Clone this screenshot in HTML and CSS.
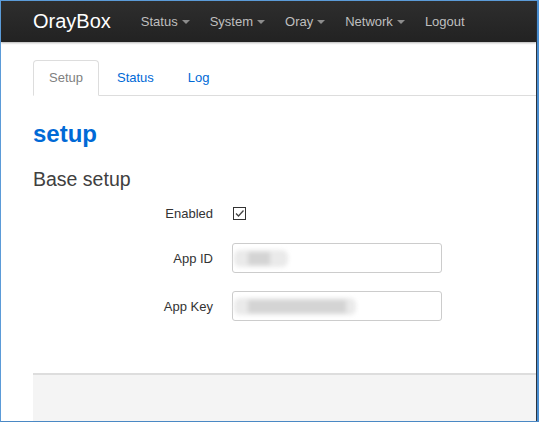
FILE: index.html
```html
<!DOCTYPE html>
<html>
<head>
<meta charset="utf-8">
<link rel="stylesheet" href="styles.css">
</head>
<body>
<div class="frame">
  <div class="inner">
    <header class="navbar">
      <span class="brand">OrayBox</span>
      <nav class="nav">
        <a class="nav-link">Status<span class="caret"></span></a>
        <a class="nav-link">System<span class="caret"></span></a>
        <a class="nav-link">Oray<span class="caret"></span></a>
        <a class="nav-link">Network<span class="caret"></span></a>
        <a class="nav-link">Logout</a>
      </nav>
    </header>
    <main class="content">
      <ul class="tabs">
        <li class="tab active">Setup</li>
        <li class="tab">Status</li>
        <li class="tab">Log</li>
      </ul>
      <h2 class="title">setup</h2>
      <h3 class="section">Base setup</h3>
      <div class="form">
        <div class="row row-check">
          <label class="label">Enabled</label>
          <span class="checkbox">
            <svg width="11" height="11" viewBox="0 0 11 11"><path d="M2 5.5 L4.5 8 L9.5 2.5" fill="none" stroke="#444" stroke-width="1.3"/></svg>
          </span>
        </div>
        <div class="row">
          <label class="label">App ID</label>
          <div class="field">
            <input class="input" type="text">
            <span class="blur blur-id"><span class="blur-core core-id"></span></span>
          </div>
        </div>
        <div class="row">
          <label class="label">App Key</label>
          <div class="field">
            <input class="input" type="text">
            <span class="blur blur-key"><span class="blur-core core-key"></span></span>
          </div>
        </div>
      </div>
      <div class="footer"></div>
    </main>
  </div>
</div>
</body>
</html>
```

FILE: styles.css
```css
* { box-sizing: border-box; }
html, body { margin: 0; padding: 0; }
body {
  font-family: "Liberation Sans", Arial, sans-serif;
  background: #fff;
  overflow: hidden;
}
.frame {
  width: 539px;
  height: 422px;
  border-top: 1px solid #5b9bd8;
  border-left: 1px solid #5b9bd8;
  border-bottom: 1px solid #4a88c4;
  border-right: 2px solid #4a8ed0;
  overflow: hidden;
}
.inner {
  height: 100%;
  border-right: 1px solid #2a3440;
  display: flex;
  flex-direction: column;
}
.navbar {
  height: 41px;
  flex: none;
  background: linear-gradient(#2e2e2e, #222);
  box-shadow: 0 1px 2px rgba(0,0,0,0.3);
  display: flex;
  align-items: center;
  padding-left: 32px;
  position: relative;
  z-index: 1;
}
.brand {
  color: #fff;
  font-size: 20px;
  margin-right: 20px;
  line-height: 1;
  margin-top: -2px;
}
.nav { display: flex; align-items: center; }
.nav-link {
  color: #bfbfbf;
  font-size: 13px;
  padding: 0 10px;
  display: flex;
  align-items: center;
}
.caret {
  display: inline-block;
  width: 0; height: 0;
  border-top: 4px solid #8c8c8c;
  border-left: 4px solid transparent;
  border-right: 4px solid transparent;
  margin-left: 4px;
  margin-top: 1px;
}
.content {
  flex: 1;
  padding-left: 32px;
  display: flex;
  flex-direction: column;
}
.tabs {
  list-style: none;
  margin: 18px 0 0 0;
  padding: 0;
  display: flex;
  border-bottom: 1px solid #ddd;
  height: 36px;
}
.tab {
  font-size: 13px;
  color: #0069d6;
  padding: 0 15px;
  margin-right: 2px;
  line-height: 34px;
  height: 36px;
  border: 1px solid transparent;
  border-radius: 4px 4px 0 0;
}
.tab.active {
  color: #808080;
  border-color: #ddd;
  border-bottom-color: #fff;
  background: #fff;
}
.title {
  margin: 24px 0 0 0;
  font-size: 24px;
  font-weight: bold;
  color: #0069d6;
  line-height: 28px;
}
.section {
  margin: 19px 0 0 0;
  font-size: 19.5px;
  font-weight: normal;
  color: #404040;
  line-height: 24px;
}
.form {
  margin-top: 9px;
  display: flex;
  flex-direction: column;
  gap: 18px;
}
.row {
  display: flex;
  align-items: center;
  height: 30px;
}
.row-check { height: 26px; margin-bottom: -1px; }
.label {
  width: 180px;
  text-align: right;
  font-size: 13px;
  color: #333;
  margin-right: 19px;
}
.checkbox {
  width: 13px; height: 13px;
  border: 1px solid #333;
  display: flex; align-items: center; justify-content: center;
  margin-left: 1px;
  background: #fff;
}
.field { position: relative; width: 210px; height: 30px; }
.input {
  width: 210px;
  height: 30px;
  border: 1px solid #ccc;
  border-radius: 3px;
  background: #fff;
  display: block;
}
.blur {
  position: absolute;
  top: 7px;
  left: 2px;
  height: 17px;
  background: #eaeaea;
  filter: blur(2px);
  border-radius: 6px;
}
.blur-id { width: 54px; }
.blur-key { width: 122px; }
.blur-core {
  position: absolute;
  top: 2px;
  left: 14px;
  height: 13px;
  background: #d4d4d4;
}
.core-id { width: 22px; }
.core-key { width: 98px; }
.footer {
  margin-top: auto;
  height: 48px;
  border-top: 2px solid #ddd;
  background: #f4f4f4;
}
```
